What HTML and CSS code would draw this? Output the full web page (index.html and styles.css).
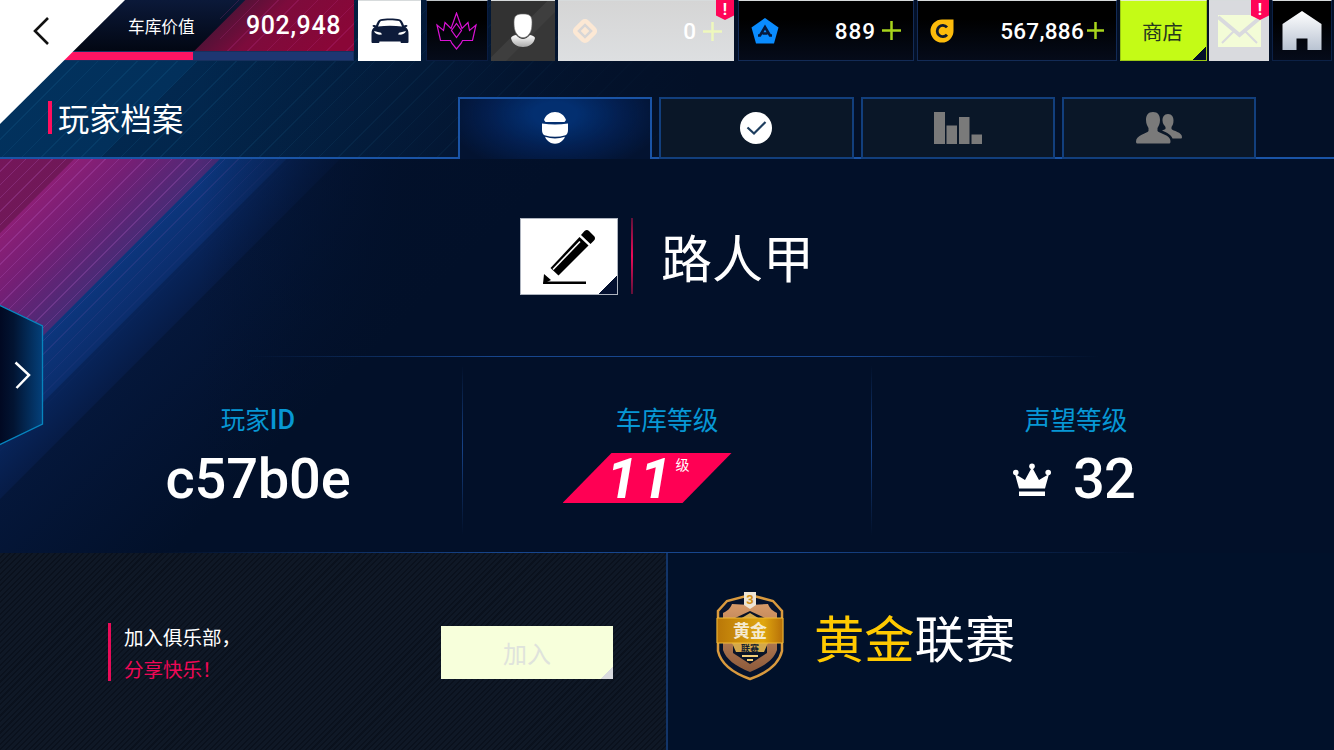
FILE: index.html
```html
<!DOCTYPE html>
<html lang="zh-CN">
<head>
    <meta charset="UTF-8">
    <meta name="viewport" content="width=device-width, initial-scale=1.0">
    <title>玩家档案</title>
    <link rel="stylesheet" href="styles.css">
</head>
<body>
    <header class="header">
        <div class="topbar">
            <div class="garage">
                <div class="garage-value">
                    <span class="garage-label">车库价值</span>
                    <span class="garage-number">902,948</span>
                </div>
                <div class="progress"><div class="progress-fill"></div></div>
            </div>
            <div class="tile tile-car">
                <svg width="38" height="26" viewBox="0 0 38 26">
                    <path fill="#0d1b3a" fill-rule="evenodd" d="M9 1.5C14 .3 24 .3 29 1.5c1.600 .5 2.800 3 4 6 .6-.9 3.500-.8 3.500 .3 0 .9-1.200 1.300-2 1.300C37 11 37.500 13 37.500 16v8q0 1-1 1h-6q-1 0-1-1.500h-21Q8.500 25 7.500 25h-6q-1 0-1-1v-8C.5 13 1 11 3.500 9.100c-.8 0-2-.4-2-1.300 0-1.100 2.900-1.200 3.500-.3 1.200-3 2.400-5.500 4-6zM7 8.500q12-1.500 24 0C30 6 29 3.500 28 3 23 2 15 2 10 3 9 3.500 8 6 7 8.500z"/>
                    <path fill="#fff" d="M3 13l7 1.700 1 1.800c-3 .5-7 0-8-3.500zM35 13l-7 1.700-1 1.800c3 .5 7 0 8-3.500z"/>
                </svg>
            </div>
            <div class="tile tile-crown">
                <svg width="41" height="38" viewBox="0 0 41 38" fill="none" stroke="#d912d4" stroke-width="1.200">
                    <path d="M20.500 1l3.500 10 2 5.500L32 10.500l1.500 8L40 13l-3.500 15.500h-10l-1.500 3-4.500 5.500-4.500-5.500-1.500-3h-10L1 13l6.500 5.500 1.500-8 6 6 2-5.500z"/>
                    <path d="M20.500 11.500l5 7-5 7-5-7z"/>
                </svg>
            </div>
            <div class="tile tile-avatar">
                <svg width="26" height="36" viewBox="0 0 26 36">
                    <defs>
                        <linearGradient id="bust" x1="0" y1="0" x2="0" y2="1">
                            <stop offset="0" stop-color="#fff"/>
                            <stop offset="1" stop-color="#aaa"/>
                        </linearGradient>
                    </defs>
                    <path fill="url(#bust)" d="M6 22q7 8 14 0 4.500 1 5 3C23 37 3 37 1 25q.5-2 5-3z"/>
                    <path fill="#fff" stroke="#6b6b6b" stroke-width=".6" d="M13 1c6 0 9 1.500 9 8 0 7-1 10-3.500 13-3 3.500-8 3.500-11 0C5 19 4 16 4 9c0-6.500 3-8 9-8z"/>
                </svg>
            </div>
            <div class="tile tile-token">
                <svg width="28" height="28" viewBox="0 0 28 28">
                    <rect x="4" y="4" width="20" height="20" rx="5" fill="#fce8d4" transform="rotate(45 14 14)"/>
                    <rect x="9.700" y="9.700" width="8.600" height="8.600" fill="none" stroke="#d8d6d6" stroke-width="2.500" transform="rotate(45 14 14)"/>
                </svg>
                <span class="amount">0</span>
                <svg class="plus" width="19" height="19" viewBox="0 0 19 19"><path d="M9.500 0v19M0 9.500h19"/></svg>
                <span class="alert">!</span>
            </div>
            <div class="tile tile-wallet tile-blue">
                <svg width="28" height="26" viewBox="0 0 28 26">
                    <path fill="#0a8cff" d="M14 0l13.500 9.500L23 25.500H5L.5 9.500z"/>
                    <path fill="none" stroke="#06193c" stroke-width="2.600" d="M7 17.500h2L14 9l5 8.500h2M11.500 15.500h5"/>
                </svg>
                <span class="amount">889</span>
                <svg class="plus" width="19" height="19" viewBox="0 0 19 19"><path d="M9.500 0v19M0 9.500h19"/></svg>
            </div>
            <div class="tile tile-wallet tile-gold">
                <svg width="24" height="24" viewBox="0 0 24 24">
                    <path fill="#fdbb0b" d="M12 .5h11.500V12A11.500 11.500 0 1 1 12 .5z"/>
                    <path fill="none" stroke="#111a2c" stroke-width="2.800" d="M17 8.300A5.600 5.600 0 1 0 17 15.700"/>
                </svg>
                <span class="amount">567,886</span>
                <svg class="plus" width="17" height="17" viewBox="0 0 17 17"><path d="M8.500 0v17M0 8.500h17"/></svg>
            </div>
            <div class="tile tile-shop">商店</div>
            <div class="tile tile-mail">
                <svg width="43" height="32" viewBox="0 0 43 32">
                    <path fill="#f3fcd7" d="M0 0h43v32H0z"/>
                    <path fill="none" stroke="#d9dade" stroke-width="4" d="M0 2l21.500 18L43 2"/>
                    <path fill="none" stroke="#d9dade" stroke-width="2" d="M4 28l12-12M39 28L27 16"/>
                </svg>
                <span class="alert">!</span>
            </div>
            <div class="tile tile-home">
                <svg width="40" height="40" viewBox="0 0 40 40">
                    <defs>
                        <linearGradient id="house" x1="0" y1="0" x2="0" y2="1">
                            <stop offset="0" stop-color="#fff"/>
                            <stop offset="1" stop-color="#b9c3d2"/>
                        </linearGradient>
                    </defs>
                    <path fill="url(#house)" d="M20 0l19.500 13v26H25.500V27.500h-11V39H.5V13z"/>
                </svg>
            </div>
        </div>

        <div class="nav">
            <h1 class="title">玩家档案</h1>
            <div class="tabs">
                <div class="tab tab-active">
                    <svg width="26" height="32" viewBox="0 0 26 32" fill="#fff">
                        <path d="M2 8C3.500 3 8 0 13 0s9.500 3 11 8l-1.500 2h-19zM0 11.500q13 2 26 0V18q0 4-2.500 5.200-10.500 3-21 0Q0 22 0 18zM3 24.700q10 3.500 20 0-1.500 4-6 6.300-4 1.500-8 0-4.500-2.300-6-6.300z"/>
                    </svg>
                </div>
                <div class="tab">
                    <svg width="32" height="32" viewBox="0 0 32 32">
                        <circle cx="16" cy="16" r="16" fill="#fff"/>
                        <path fill="none" stroke="#1d3d5e" stroke-width="2.200" d="M7.500 15.500l6.500 6L25.500 10"/>
                    </svg>
                </div>
                <div class="tab">
                    <svg width="48" height="32" viewBox="0 0 48 32" fill="#7a7a7a">
                        <path d="M0 0h11v32H0zM12.500 13.500H23V32H12.500zM25 5h10.500v27H25zM37.500 22.500H48V32H37.500z"/>
                    </svg>
                </div>
                <div class="tab">
                    <svg width="46" height="32" viewBox="0 0 46 32" fill="#7a7a7a">
                        <path d="M17 0c5 0 7 3.500 7 8 0 4-1.500 6-2.500 8v3c2 2.500 13 4 13 10q0 2.500-1 2.500H1q-1 0-1-2C0 23 11 21.500 12.500 19v-3C11.500 14 10 12 10 8c0-4.500 2-8 7-8z"/>
                        <path d="M32 2c4 0 5.500 3 5.500 6.500 0 3.500-1 5-2 6.500v2c1.500 2 10.500 3 10.500 8q0 1.500-1 1.500h-8.500c-1.500-4-6-6-10.500-8 1.500-.6 3-1 3.500-1.500v-2c-1-1.500-3-3-3-6.500C26.500 5 28 2 32 2z"/>
                    </svg>
                </div>
            </div>
        </div>
        <div class="back">
            <svg width="18" height="30" viewBox="0 0 18 30" fill="none" stroke="#111" stroke-width="2.600"><path d="M16 2L3 15l13 13"/></svg>
        </div>
    </header>

    <main class="content">
        <section class="player">
            <div class="edit">
                <svg width="56" height="58" viewBox="0 0 56 58">
                    <path d="M8.500 40L37.500 9l9 8.500-30 30z"/>
                    <path d="M39 7l3.500-4Q45 1 47 3l5 5q2 2 0 4.500L48.500 16zM2 46l7 6-8 4z"/>
                    <path fill="none" stroke="#fff" stroke-width="1.600" d="M11 41.500L38 13.500"/>
                    <path d="M2 53.500h42V56H1z"/>
                </svg>
            </div>
            <div class="player-name">路人甲</div>
        </section>

        <section class="stats">
            <div class="stat">
                <div class="stat-label label-id">玩家<b>ID</b></div>
                <div class="stat-value player-id">c57b0e</div>
            </div>
            <div class="stat">
                <div class="stat-label">车库等级</div>
                <div class="level"><span class="level-number">11</span><span class="level-unit">级</span></div>
            </div>
            <div class="stat">
                <div class="stat-label">声望等级</div>
                <div class="stat-value reputation">
                    <svg width="38" height="33" viewBox="0 0 38 33" fill="#fff">
                        <path d="M6 25.500L2 11l10 6 6-11h2l6 11 10-6-4 14.500zM6 28.500h26V33H6z"/>
                        <circle cx="2.800" cy="9.500" r="2.800"/><circle cx="19" cy="3.300" r="2.800"/><circle cx="35.200" cy="9.500" r="2.800"/>
                    </svg>
                    <span>32</span>
                </div>
            </div>
        </section>

        <section class="bottom">
            <div class="club">
                <div class="club-text">
                    <div>加入俱乐部，</div>
                    <div class="club-pink">分享快乐！</div>
                </div>
                <div class="join">加入</div>
            </div>
            <div class="league">
                <svg class="badge" width="68" height="90" viewBox="0 0 68 90">
                    <defs>
                        <linearGradient id="gold" x1="0" y1="0" x2="1" y2="0">
                            <stop offset="0" stop-color="#b97708"/>
                            <stop offset=".7" stop-color="#e0a70f"/>
                            <stop offset="1" stop-color="#b66f08"/>
                        </linearGradient>
                        <linearGradient id="bronze" x1="0" y1="0" x2="0" y2="1">
                            <stop offset="0" stop-color="#d79a68"/>
                            <stop offset="1" stop-color="#8d5a3b"/>
                        </linearGradient>
                    </defs>
                    <path d="M34 4l23 6 9 10v40c-3 13-15 22-32 28C17 82 5 73 2 60V20l9-10z" fill="#06132d" stroke="#d99a3e" stroke-width="2.500"/>
                    <path d="M34 14l18-1c2 5 5 7 9 9v37c-3 9-12 16-27 22C19 75 10 68 7 59V22c4-2 7-4 9-9z" fill="url(#bronze)"/>
                    <path d="M34 20l17 8v34L34 73 17 62V28z" fill="#0a1428"/>
                    <path d="M34 22l10 6H24zM16 52h36l-4 9H20z" fill="#d3a84b"/>
                    <path d="M1 27h66v25H1z" fill="url(#gold)" stroke="#f1ba34"/>
                    <path d="M26 65h16M31 69h6" stroke="#f2ce79" stroke-width="2"/>
                    <path d="M28 1h12v13l-6 4-6-4z" fill="#eee5d5"/>
                    <text x="34" y="13" class="badge-rank">3</text>
                    <text x="34" y="46" class="badge-gold">黄金</text>
                    <text x="34" y="61" class="badge-small">联赛</text>
                </svg>
                <div class="league-name"><span>黄金</span>联赛</div>
            </div>
        </section>
    </main>

    <div class="drawer">
        <svg width="45" height="142" viewBox="0 0 45 142">
            <defs>
                <linearGradient id="drawer" x1="0" y1="0" x2="1" y2="0">
                    <stop offset="0" stop-color="#010720"/>
                    <stop offset=".35" stop-color="#021432"/>
                    <stop offset="1" stop-color="#04407a"/>
                </linearGradient>
            </defs>
            <path d="M-2 .5L42.500 22v98L-2 141.500z" fill="url(#drawer)" stroke="#0785be" stroke-width="1.300"/>
            <path d="M15.500 58.500L29 71 16.500 84" fill="none" stroke="#fff" stroke-width="2.500"/>
        </svg>
    </div>
</body>
</html>
```

FILE: styles.css
```css
* {
    box-sizing: border-box;
}
body {
    margin: 0;
    width: 1334px;
    height: 750px;
    overflow: hidden;
    position: relative;
    background-color: #021029;
    color: #fff;
    font-family: Roboto, "Noto Sans CJK SC", sans-serif;
}
svg {
    display: block;
    flex: none;
}

/* header */
.header {
    position: relative;
    height: 159px;
    background:
        linear-gradient(90deg, transparent 200px, #031027 700px),
        repeating-linear-gradient(135deg, rgba(30, 120, 170, 0.15) 0 1px, transparent 1px 14px),
        linear-gradient(135deg, #02335f 0, #02305b 182px, #02284f 183px, #032347 330px, #031a3b 480px);
}
.topbar {
    display: flex;
    height: 61px;
}
.garage {
    width: 354px;
    margin-right: 4px;
}
.garage-value {
    height: 51px;
    padding: 0 13px 0 128px;
    display: flex;
    align-items: center;
    justify-content: space-between;
    background:
        linear-gradient(135deg, #0b1730 140px, transparent 174px) 0 0 / 0 0 no-repeat,
        linear-gradient(135deg, transparent 173px, #551137 174px, #7d0b3c 205px, #8a0637 270px),
        linear-gradient(#0b1939, #020713);
}
.garage-value {
    background:
        repeating-linear-gradient(135deg, transparent 0 13px, rgba(190, 50, 150, 0.22) 13px 14px) 220px 0 no-repeat,
        linear-gradient(135deg, transparent 173px, #551137 174px, #7d0b3c 205px, #8a0637 270px),
        linear-gradient(#0b1939, #020713);
}
.garage-label {
    font-size: 16.700px;
}
.garage-number {
    font-size: 25px;
    font-weight: 500;
    letter-spacing: 0.600px;
}
.progress {
    height: 10px;
    border: 1px solid #17305e;
    background-color: #1d3772;
}
.progress-fill {
    width: 192px;
    height: 8px;
    background-color: #ff1463;
}
.back {
    position: absolute;
    top: 0;
    left: 0;
    width: 125px;
    height: 124px;
    padding: 16px 32px;
    background-color: #fff;
    clip-path: polygon(0 0, 100% 0, 0 100%);
}
.tile {
    position: relative;
    height: 61px;
    display: flex;
    align-items: center;
    justify-content: center;
    border-top: 1px solid #d7dbdc;
    background: linear-gradient(#000 30%, #050b1a);
}
.tile-car {
    width: 63px;
    margin-right: 5px;
    background: #fff;
}
.tile-crown {
    width: 62px;
    margin-right: 3px;
    padding-right: 2px;
    border: 1px solid #0a1d42;
    border-top-color: #bfc5c8;
}
.tile-avatar {
    width: 64px;
    margin-right: 3px;
    background: linear-gradient(135deg, #323232 45%, #3e3e3e 46% 60%, #373737 61%);
}
.tile-car svg,
.tile-avatar svg {
    margin-bottom: 1px;
}
.tile-token,
.tile-wallet {
    justify-content: flex-start;
    padding: 0 12px;
}
.tile-token {
    width: 176px;
    margin-right: 4px;
    padding-left: 13px;
    background: linear-gradient(#d5d5d5, #dddfe1);
}
.tile-wallet {
    border: 1px solid #132b56;
    border-top-color: #d7dbdc;
}
.tile-blue {
    width: 176px;
    margin-right: 3px;
}
.tile-gold {
    width: 200px;
    margin-right: 3px;
}
.amount {
    margin-left: auto;
    margin-right: 6px;
    font-size: 22.500px;
    font-weight: 500;
    letter-spacing: 1px;
}
.tile-gold .amount {
    margin-right: 3px;
    letter-spacing: 0.300px;
}
.plus {
    fill: none;
    stroke: #a8d51c;
    stroke-width: 2.500;
}
.tile-token .plus {
    stroke: #eef8bd;
}
.alert {
    position: absolute;
    top: -1px;
    right: 0;
    width: 18px;
    height: 20px;
    background-color: #ff0558;
    clip-path: polygon(0 0, 100% 0, 100% 78%, 50% 100%, 0 78%);
    font-size: 16px;
    font-weight: 700;
    line-height: 19px;
    text-align: center;
}
.tile-shop {
    width: 87px;
    margin-right: 2px;
    padding: 1px 2px 0 0;
    background: linear-gradient(135deg, #c4fb16 92px, #02102a 92px);
    border: 1px solid #9cc815;
    border-top-color: #e6f0c8;
    color: #26361f;
    font-size: 20.500px;
}
.tile-mail {
    width: 60px;
    margin-right: 3px;
    background: #d9dade;
}
.tile-home {
    width: 60px;
    border: 1px solid #0c2146;
    border-top-color: #d7dbdc;
}

/* title and tabs */
.nav {
    display: flex;
    align-items: flex-end;
    height: 98px;
    padding-left: 48px;
    border-bottom: 2px solid #1a54a6;
}
.title {
    width: 410px;
    height: 33px;
    margin: 0 0 23px;
    padding-left: 6px;
    border-left: 4px solid #ff0f5e;
    font-size: 31.300px;
    font-weight: 400;
    line-height: 39px;
}
.tabs {
    display: flex;
    gap: 7px;
    margin-bottom: -2px;
}
.tab {
    width: 194.300px;
    height: 62px;
    display: flex;
    align-items: center;
    justify-content: center;
    border: 2px solid #123f7d;
    background-color: #0a1728;
}
.tab-active {
    border-color: #1a54a6;
    border-bottom: none;
    padding-bottom: 2px;
    background: radial-gradient(ellipse 110px 60px at 50% 15px, #032f70 20%, rgba(3, 33, 86, 0.8) 60%, transparent), #031331;
}

/* main area */
.content {
    position: relative;
    height: 591px;
    background:
        linear-gradient(135deg, #75165a 0, #701858 52px, #8c1f76 53px, #751f75 95px, #472b76 155px, #0c367d 156px, #0b2d6c 202px, rgba(8, 37, 92, 0.95) 203px, rgba(7, 29, 74, 0.9) 240px, rgba(5, 24, 61, 0.85) 241px, rgba(3, 16, 41, 0) 400px),
        #021029;
}
.content::before {
    content: "";
    position: absolute;
    inset: 0;
    background:
        repeating-linear-gradient(135deg, transparent 0 8.400px, rgba(190, 100, 205, 0.24) 8.400px 9.400px);
    -webkit-mask-image: linear-gradient(135deg, #000 155px, rgba(0, 0, 0, 0.6) 156px, transparent 215px);
    mask-image: linear-gradient(135deg, #000 155px, rgba(0, 0, 0, 0.6) 156px, transparent 215px);
}
/* darkens the right end of the bands */
.content::after {
    content: "";
    position: absolute;
    inset: 0;
    background: linear-gradient(90deg, transparent 200px, rgba(2, 16, 41, 0.3) 280px, rgba(2, 16, 41, 0.9) 400px);
}
.player,
.stats,
.bottom {
    position: relative;
    z-index: 1;
}
.player {
    height: 198px;
    padding-left: 520px;
    display: flex;
    align-items: center;
    padding-bottom: 4px;
    background: linear-gradient(90deg, transparent 250px, #17468d 500px 850px, transparent 1100px) bottom / 100% 1px no-repeat;
}
.edit {
    width: 98px;
    height: 77px;
    padding: 9px 0 0 21px;
    border: 1px solid #aeb4bf;
    background: linear-gradient(135deg, #fff 108px, #03102f 108px);
}
.player-name {
    height: 76px;
    margin-left: 13px;
    padding-left: 28px;
    border-left: 2px solid;
    border-image: linear-gradient(#5d1138, #ec0b58 50%, #5d1138) 1;
    font-size: 51px;
    line-height: 86px;
}
.stats {
    height: 196px;
    display: grid;
    grid-template-columns: repeat(3, 409px);
    justify-content: center;
    background: linear-gradient(90deg, transparent 160px, #17468d 500px 800px, transparent 1140px) bottom / 100% 1px no-repeat;
}
.stat {
    display: flex;
    flex-direction: column;
    align-items: center;
    padding-top: 45px;
    background: linear-gradient(transparent 8px, #174286 90px, transparent 178px) right / 1px 100% no-repeat;
}
.stat:last-child {
    background: none;
}
.stat-label {
    height: 37px;
    color: #0797d4;
    font-size: 25.700px;
    line-height: 38px;
}
.label-id {
    font-size: 24.500px;
}
.stat-label b {
    font-size: 27px;
    font-weight: 500;
    line-height: 1;
}
.stat-value {
    display: flex;
    align-items: center;
    gap: 22px;
    height: 80px;
    font-size: 56px;
    font-weight: 500;
}
.player-id {
    letter-spacing: -0.200px;
}
.reputation {
    margin-right: 4px;
    letter-spacing: -0.800px;
}
.level {
    width: 169px;
    height: 50px;
    margin: 14px 40px 0 0;
    padding-left: 44px;
    display: flex;
    background-color: #ff0054;
    clip-path: polygon(49px 0, 100% 0, 120px 100%, 0 100%);
}
.level-number {
    width: 69px;
    font-size: 56px;
    font-style: italic;
    font-weight: 700;
    letter-spacing: 2px;
    line-height: 52px;
}
.level-unit {
    font-size: 14px;
    line-height: 24px;
}

/* club and league */
.bottom {
    display: flex;
    height: 197px;
}
.club {
    width: 668px;
    padding-left: 108px;
    display: flex;
    align-items: center;
    border-right: 2px solid #123468;
    background: repeating-linear-gradient(135deg, #0f1826 0 2.500px, #0a111d 2.500px 4px);
}
.club-text {
    width: 333px;
    height: 58px;
    padding-left: 13px;
    border-left: 3px solid #e80c58;
    font-size: 19.500px;
    line-height: 32px;
    margin-top: 1px;
}
.club-text .club-pink {
    color: #f00857;
}
.join {
    width: 172px;
    height: 53px;
    margin-top: 1px;
    display: flex;
    align-items: center;
    justify-content: center;
    background: linear-gradient(135deg, #f7ffdb 150px, #d9dade 150px);
    color: #dfe3dc;
    font-size: 24px;
}
.league {
    flex: 1;
    display: flex;
    align-items: flex-start;
    padding: 38px 0 0 48px;
    background-color: rgba(2, 18, 44, 0.6);
}
.league-name {
    margin-left: 30px;
    font-size: 50.300px;
    line-height: 99px;
}
.league-name span {
    color: #ffc900;
}
.badge text {
    text-anchor: middle;
}
.badge-rank {
    font-size: 13px;
    font-weight: 700;
    fill: #d29016;
}
.badge-gold {
    font-size: 17px;
    font-weight: 700;
    fill: #f5ead0;
}
.badge-small {
    font-size: 9px;
    font-weight: 700;
    fill: #14202f;
}

/* side drawer handle */
.drawer {
    position: absolute;
    left: 0;
    top: 304px;
    z-index: 2;
}
```
